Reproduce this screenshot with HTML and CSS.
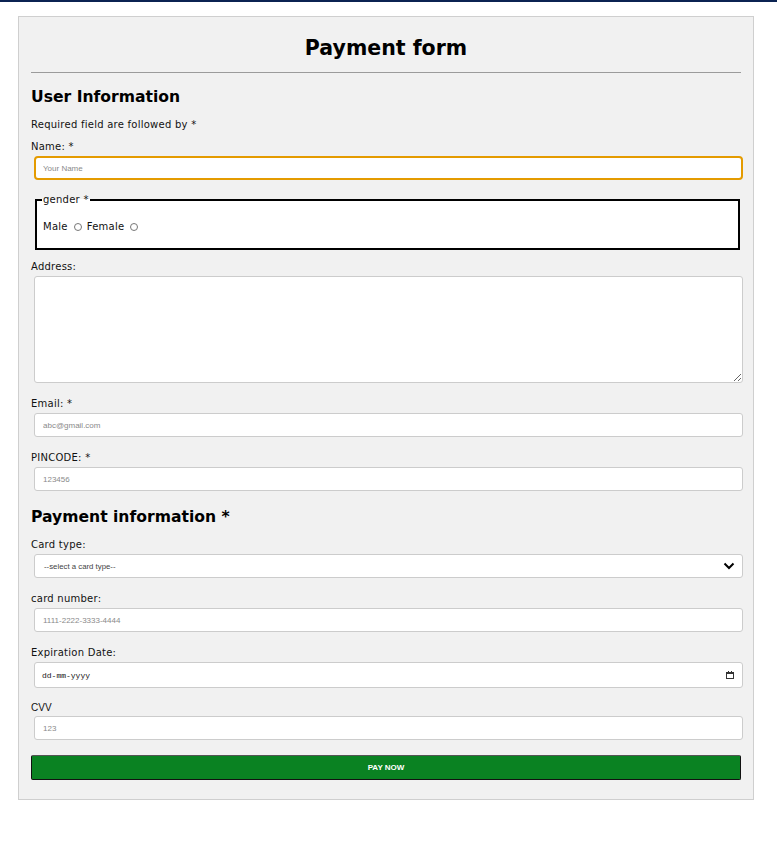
FILE: index.html
```html
<!DOCTYPE html>
<html lang="en">
<head>
<meta charset="utf-8">
<title>Payment form</title>
<link rel="stylesheet" href="styles.css">
</head>
<body>
<div class="topbar"></div>
<form class="card">
  <h2 class="title">Payment form</h2>
  <hr class="rule">
  <h3 class="section">User Information</h3>
  <p class="note">Required field are followed by *</p>

  <label class="lbl lbl-first">Name: *</label>
  <input class="field focus" type="text" placeholder="Your Name">

  <fieldset class="gender">
    <legend>gender *</legend>
    <div class="radios">
      <span>Male</span><span class="radio"></span>
      <span>Female</span><span class="radio"></span>
    </div>
  </fieldset>

  <label class="lbl lbl-addr">Address:</label>
  <textarea class="field area"></textarea>

  <label class="lbl">Email: *</label>
  <input class="field" type="text" placeholder="abc@gmail.com">

  <label class="lbl">PINCODE: *</label>
  <input class="field" type="text" placeholder="123456">

  <h3 class="section section-pay">Payment information *</h3>

  <label class="lbl lbl-card">Card type:</label>
  <div class="select-wrap">
    <div class="field select">--select a card type--</div>
    <svg class="chev" width="12" height="8" viewBox="0 0 12 8"><path d="M1.5 1.5 L6 6 L10.5 1.5" fill="none" stroke="#000" stroke-width="2"/></svg>
  </div>

  <label class="lbl">card number:</label>
  <input class="field" type="text" placeholder="1111-2222-3333-4444">

  <label class="lbl">Expiration Date:</label>
  <div class="field date">
    <span class="date-text">dd-mm-yyyy</span>
    <svg class="cal" width="8" height="8" viewBox="0 0 8 8"><rect x="0.5" y="1.5" width="7" height="6" fill="none" stroke="#333" stroke-width="1"/><rect x="0.5" y="1.5" width="7" height="1.5" fill="#333"/><rect x="2" y="0" width="1" height="2" fill="#333"/><rect x="5" y="0" width="1" height="2" fill="#333"/></svg>
  </div>

  <label class="lbl lbl-cvv">CVV</label>
  <input class="field" type="text" placeholder="123">

  <div class="pay">PAY NOW</div>
</form>
</body>
</html>
```
FILE: styles.css
```css
html, body {
  margin: 0;
  padding: 0;
  background: #ffffff;
}
body {
  font-family: "DejaVu Sans", Verdana, sans-serif;
  color: #111;
}
.topbar {
  height: 2px;
  background: #0b2352;
}
.card {
  box-sizing: border-box;
  width: 736px;
  margin: 14px 0 0 18px;
  padding: 0 12px 19px 12px;
  background: #f1f1f1;
  border: 1px solid #cfcfcf;
}
.title {
  margin: 19px 0 0;
  font-size: 20.5px;
  line-height: 24px;
  text-align: center;
  font-weight: bold;
  color: #000;
}
.rule {
  margin: 12px 0 0;
  border: 0;
  border-top: 1px solid #9b9b9b;
  height: 0;
}
.section {
  margin: 14px 0 0;
  font-size: 15.6px;
  line-height: 20px;
  font-weight: bold;
  color: #000;
}
.section-pay {
  margin-top: 16px;
}
.note {
  margin: 11px 0 0;
  font-size: 10px;
  letter-spacing: 0.25px;
  line-height: 13px;
}
.lbl {
  display: block;
  font-size: 10px;
  letter-spacing: 0.25px;
  line-height: 13px;
  margin: 14px 0 3px;
}
.lbl-first { margin-top: 9px; }
.lbl-addr { margin-top: 10px; }
.lbl-card { margin-top: 11px; }
.lbl-cvv {
  font-family: "Liberation Sans", Arial, sans-serif;
  font-size: 10px;
  letter-spacing: 0;
  margin: 13px 0 2px;
}
.field {
  box-sizing: border-box;
  display: block;
  width: 709px;
  height: 24px;
  margin: 0 0 0 3px;
  padding: 0 8px;
  background: #fff;
  border: 1px solid #cccccc;
  border-radius: 3px;
  font-family: "Liberation Sans", Arial, sans-serif;
  font-size: 8px;
  color: #222;
  outline: none;
}
.field::placeholder {
  color: #8a8a8a;
}
.focus {
  border: 2px solid #e49b00;
  border-radius: 4px;
  padding: 0 7px;
}
.gender {
  box-sizing: border-box;
  width: 705px;
  height: 56px;
  margin: 14px 0 0 4px;
  padding: 0 6px;
  border: 2px solid #000;
  background: #fff;
}
.gender legend {
  font-size: 10px;
  letter-spacing: 0.25px;
  line-height: 12px;
  padding: 0 1px;
  margin-left: -1px;
}
.radios {
  display: flex;
  align-items: center;
  font-size: 10px;
  letter-spacing: 0.25px;
  line-height: 13px;
  margin-top: 14px;
}
.radio {
  display: inline-block;
  box-sizing: border-box;
  width: 8px;
  height: 8px;
  border: 1px solid #777;
  border-radius: 50%;
  margin: 0 5px 0 6px;
}
.area {
  height: 107px;
  resize: vertical;
}
.select-wrap {
  position: relative;
}
.select {
  display: flex;
  align-items: center;
  font-size: 7.8px;
  color: #444;
  padding-left: 9px;
}
.chev {
  position: absolute;
  right: 6px;
  top: 8px;
}
.date {
  height: 26px;
  display: flex;
  align-items: center;
  justify-content: space-between;
  padding: 0 8px 0 7px;
}
.date-text {
  font-family: "Liberation Mono", "DejaVu Sans Mono", monospace;
  font-size: 8px;
  color: #111;
}
.cal {
  display: block;
}
.pay {
  box-sizing: border-box;
  margin-top: 15px;
  height: 25px;
  background: #0a8222;
  border: 1px solid #111;
  border-top-color: #555;
  border-radius: 2px;
  color: #fff;
  font-family: "Liberation Sans", Arial, sans-serif;
  font-weight: bold;
  font-size: 8px;
  display: flex;
  align-items: center;
  justify-content: center;
}
```
